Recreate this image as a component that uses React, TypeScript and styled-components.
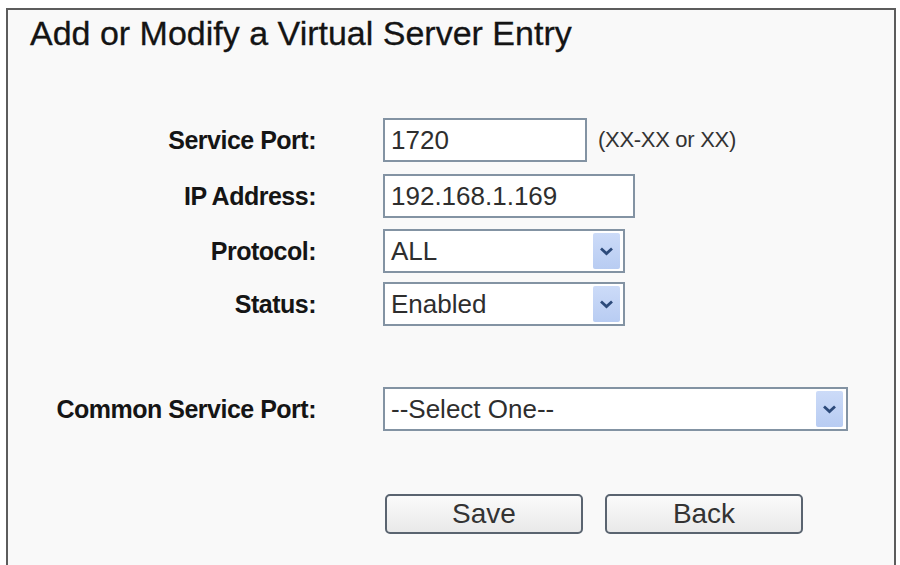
import styled, { createGlobalStyle } from "styled-components";

const GlobalStyle = createGlobalStyle`
  html, body {
    margin: 0;
    padding: 0;
    background: #ffffff;
    font-family: "Liberation Sans", Arial, sans-serif;
  }
`;

const Page = styled.div`
  width: 900px;
  height: 565px;
  overflow: hidden;
  padding: 8px 4px 0 6px;
  box-sizing: border-box;
`;

const Panel = styled.div`
  height: 600px;
  background: #f9f9f9;
  border: 2px solid #5c5c5c;
  border-bottom: none;
  box-sizing: border-box;
`;

const Title = styled.h1`
  margin: 0;
  padding: 5px 0 0 22px;
  font-size: 34px;
  line-height: 36px;
  font-weight: normal;
  color: #141414;
  -webkit-text-stroke: 0.3px #141414;
`;

const Form = styled.div`
  display: grid;
  grid-template-columns: 308px 1fr;
  column-gap: 67px;
  align-items: center;
  margin-top: 67px;
`;

const Label = styled.div<{ $gap?: number }>`
  text-align: right;
  font-size: 25px;
  font-weight: bold;
  letter-spacing: -0.5px;
  color: #151515;
  margin-bottom: ${(p) => p.$gap ?? 12}px;
`;

const Cell = styled.div<{ $gap?: number }>`
  display: flex;
  align-items: center;
  gap: 11px;
  margin-bottom: ${(p) => p.$gap ?? 12}px;
`;

const TextInput = styled.input<{ $width: number }>`
  width: ${(p) => p.$width}px;
  height: 44px;
  box-sizing: border-box;
  border: 2px solid #8393a3;
  background: #ffffff;
  padding: 0 6px;
  font-family: "Liberation Sans", Arial, sans-serif;
  font-size: 26px;
  color: #2e2e2e;
  outline: none;
`;

const Hint = styled.span`
  font-size: 22px;
  color: #333;
  letter-spacing: -0.3px;
`;

const SelectBox = styled.div<{ $width: number }>`
  width: ${(p) => p.$width}px;
  height: 44px;
  box-sizing: border-box;
  border: 2px solid #8393a3;
  background: #ffffff;
  display: flex;
  align-items: center;
  justify-content: space-between;
  padding: 2px 3px 2px 6px;
  font-size: 26px;
  color: #2e2e2e;
`;

const ArrowButton = styled.span`
  width: 27px;
  height: 100%;
  display: flex;
  align-items: center;
  justify-content: center;
  background: linear-gradient(#ccdbf8, #b8ccf2);
  border-radius: 2px;
`;

const Buttons = styled.div`
  display: flex;
  gap: 22px;
  margin: 63px 0 0 2px;
`;

const Button = styled.button`
  width: 198px;
  height: 40px;
  border: 2px solid #5a6470;
  border-radius: 5px;
  background: linear-gradient(#fbfbfb, #e9e9e9);
  font-family: "Liberation Sans", Arial, sans-serif;
  font-size: 28px;
  color: #333;
  padding: 0;
`;

const Chevron = () => (
  <svg width="15" height="10" viewBox="0 0 15 10">
    <path d="M2 2.5 L7.5 7.5 L13 2.5" fill="none" stroke="#2c4a7a" strokeWidth="2.8" />
  </svg>
);

const Select = ({ value, width }: { value: string; width: number }) => (
  <SelectBox $width={width}>
    <span>{value}</span>
    <ArrowButton>
      <Chevron />
    </ArrowButton>
  </SelectBox>
);

export default function App() {
  return (
    <>
      <GlobalStyle />
      <Page>
        <Panel>
          <Title>Add or Modify a Virtual Server Entry</Title>
          <Form>
            <Label>Service Port:</Label>
            <Cell>
              <TextInput $width={204} value="1720" readOnly />
              <Hint>(XX-XX or XX)</Hint>
            </Cell>

            <Label $gap={11}>IP Address:</Label>
            <Cell $gap={11}>
              <TextInput $width={252} value="192.168.1.169" readOnly />
            </Cell>

            <Label $gap={9}>Protocol:</Label>
            <Cell $gap={9}>
              <Select value="ALL" width={242} />
            </Cell>

            <Label $gap={61}>Status:</Label>
            <Cell $gap={61}>
              <Select value="Enabled" width={242} />
            </Cell>

            <Label $gap={0}>Common Service Port:</Label>
            <Cell $gap={0}>
              <Select value="--Select One--" width={465} />
            </Cell>

            <div />
            <Buttons>
              <Button>Save</Button>
              <Button>Back</Button>
            </Buttons>
          </Form>
        </Panel>
      </Page>
    </>
  );
}
